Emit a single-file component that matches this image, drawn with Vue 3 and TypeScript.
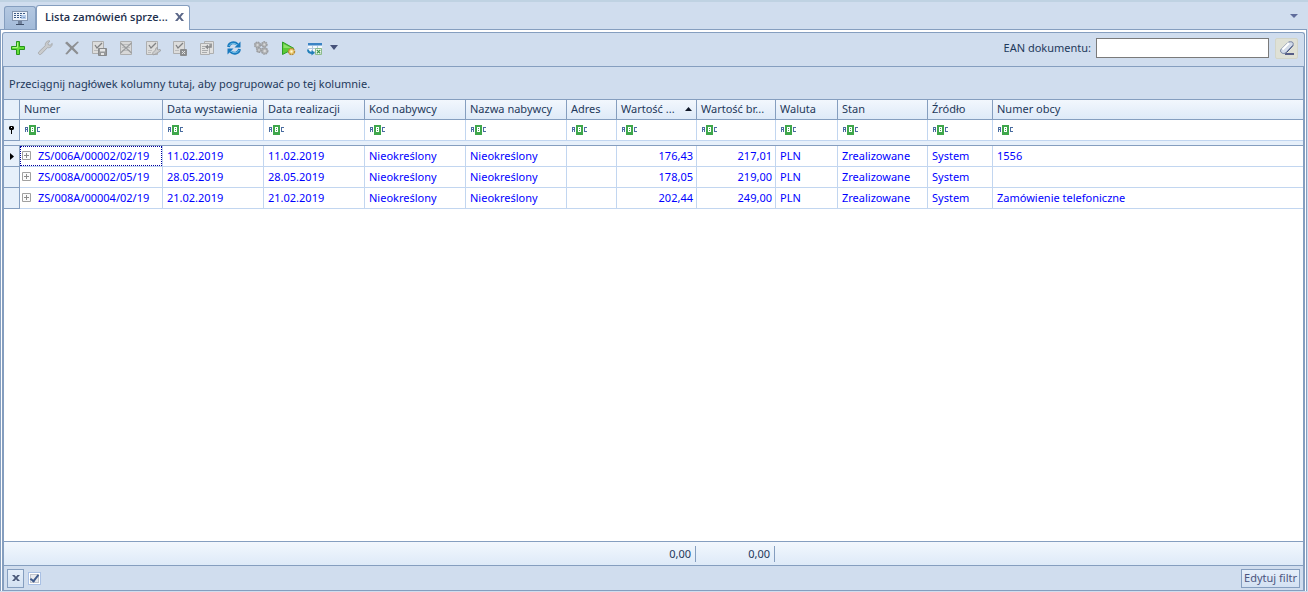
<script setup lang="ts">
import { ref } from 'vue'

interface Column {
  key: string
  title: string
  width: number
  numeric?: boolean
  sorted?: boolean
}

interface Order {
  [key: string]: string
}

const columns: Column[] = [
  { key: 'number', title: 'Numer', width: 143 },
  { key: 'issued', title: 'Data wystawienia', width: 101 },
  { key: 'due', title: 'Data realizacji', width: 101 },
  { key: 'buyerCode', title: 'Kod nabywcy', width: 101 },
  { key: 'buyerName', title: 'Nazwa nabywcy', width: 101 },
  { key: 'address', title: 'Adres', width: 50 },
  { key: 'net', title: 'Wartość ...', width: 80, numeric: true, sorted: true },
  { key: 'gross', title: 'Wartość br...', width: 79, numeric: true },
  { key: 'currency', title: 'Waluta', width: 62 },
  { key: 'state', title: 'Stan', width: 90 },
  { key: 'source', title: 'Źródło', width: 65 },
  { key: 'foreign', title: 'Numer obcy', width: 0 },
]

const orders: Order[] = [
  { number: 'ZS/006A/00002/02/19', issued: '11.02.2019', due: '11.02.2019', net: '176,43', gross: '217,01', foreign: '1556' },
  { number: 'ZS/008A/00002/05/19', issued: '28.05.2019', due: '28.05.2019', net: '178,05', gross: '219,00', foreign: '' },
  { number: 'ZS/008A/00004/02/19', issued: '21.02.2019', due: '21.02.2019', net: '202,44', gross: '249,00', foreign: 'Zamówienie telefoniczne' },
].map((o) => ({
  buyerCode: 'Nieokreślony',
  buyerName: 'Nieokreślony',
  address: '',
  currency: 'PLN',
  state: 'Zrealizowane',
  source: 'System',
  ...o,
}))

const ean = ref('')
const filterOn = ref(true)
const selected = ref(0)
</script>

<template>
  <div class="window">
    <nav class="tabs">
      <button class="tab home" aria-label="Pulpit">
        <svg width="16" height="16" viewBox="0 0 16 16">
          <rect x="0.5" y="1.5" width="15" height="9" fill="#eef4fb" stroke="#8496b0" />
          <path d="M2 3.500h12M2 5.500h9M2 7.500h12" stroke="#3c5a86" stroke-dasharray="2 1" />
          <path d="M9 5h5v4H9z" fill="#9dbbe2" opacity=".7" />
          <path d="M6 11h4v3H6z" fill="#6f809a" />
          <path d="M4 14.500h8" stroke="#3f4f68" />
        </svg>
      </button>
      <div class="tab active">
        <span>Lista zamówień sprze...</span>
        <button class="close" aria-label="Zamknij kartę">
          <svg width="9" height="8" viewBox="0 0 9 8"><path d="M0 0h2.500l2 2.500 2-2.500H9L5.800 4 9 8H6.500l-2-2.500-2 2.500H0l3.200-4z" fill="#5b6788" /></svg>
        </button>
      </div>
      <button class="tab-menu" aria-label="Lista kart">
        <svg width="8" height="4" viewBox="0 0 8 4"><path d="M0 0h8L4 4z" fill="#5f6c9b" /></svg>
      </button>
    </nav>

    <main class="frame">
      <div class="panel">
        <div class="toolbar">
          <button class="tool" aria-label="Dodaj">
            <svg width="16" height="16" viewBox="0 0 16 16"><path d="M6.500 1.500h3v5h5v3h-5v5h-3v-5h-5v-3h5z" fill="#63dc35" stroke="#27951c" /><path d="M7.500 2.500v5h-5" fill="none" stroke="#b2f58c" /></svg>
          </button>
          <button class="tool" aria-label="Edytuj">
            <svg width="16" height="16" viewBox="0 0 16 16"><path d="M10 1.500c1-.8 2.300-.8 3-.5l-2 2.200.4 1.700 1.800.3 2-1.800c.2 2.700-1.900 4.900-4.700 4.200L4.300 14c-1.600 1.600-4-.5-2.400-2.200L8.400 5.500C8 4 8.600 2.500 10 1.500z" fill="#c9cbcd" stroke="#a6a8aa" stroke-width=".9" /></svg>
          </button>
          <button class="tool" aria-label="Usuń">
            <svg width="16" height="16" viewBox="0 0 16 16"><path d="M1 3l2-1.500 5 4.700L13.500 1.500 15 2 9.500 7.700l5 5.300-1.500 1.500-5.200-5L3 14.500 1.200 14l5-6z" fill="#8d8f92" /></svg>
          </button>
          <button class="tool" aria-label="Zatwierdź i zapisz">
            <svg width="16" height="16" viewBox="0 0 16 16"><path d="M1.500 1.500h11v12h-11z" fill="#dddddc" stroke="#adaeaf" /><path d="M4 5l2 3 5-5" fill="none" stroke="#808284" stroke-width="1.300" /><path d="M3 10.500h4" stroke="#bbbcbd" /><path d="M7.500 8.500h8v7h-8z" fill="#97999b" stroke="#87898b" /><path d="M9 9h5v2.500H9zM10 13h3v2h-3z" fill="#e4e5e6" /></svg>
          </button>
          <button class="tool" aria-label="Anuluj dokument">
            <svg width="16" height="16" viewBox="0 0 16 16"><path d="M2.500 1.500h11v13h-11z" fill="#d8d8d8" stroke="#adaeaf" /><path d="M4 4.500h8M4 7.500h8M4 10.500h8" stroke="#bbbcbd" /><path d="M2.500 3l11 10M13.500 3l-11 10" stroke="#9a9c9e" stroke-width="1.200" /></svg>
          </button>
          <button class="tool" aria-label="Zatwierdź z korektą">
            <svg width="16" height="16" viewBox="0 0 16 16"><path d="M1.500 1.500h11v13h-11z" fill="#dddddc" stroke="#adaeaf" /><path d="M4 5l2 3 5-5" fill="none" stroke="#808284" stroke-width="1.300" /><path d="M3 10.500h4M3 12.500h3" stroke="#bbbcbd" /><path d="M8.500 15l-1-2 3-3 .5-2 1.500-.5v2l1.500.5 1-.8.5 1.800-2.500 1.500z" fill="#cccdce" stroke="#999b9d" stroke-width=".8" /></svg>
          </button>
          <button class="tool" aria-label="Cofnij zatwierdzenie">
            <svg width="16" height="16" viewBox="0 0 16 16"><path d="M1.500 1.500h11v12h-11z" fill="#dddddc" stroke="#adaeaf" /><path d="M4 5l2 3 5-5" fill="none" stroke="#808284" stroke-width="1.300" /><path d="M3 10.500h4" stroke="#bbbcbd" /><rect x="8" y="9" width="7" height="7" rx="1" fill="#8a8c8e" /><path d="M10 11l3 3M13 11l-3 3" stroke="#e2e3e4" /></svg>
          </button>
          <button class="tool" aria-label="Przekształć dokument">
            <svg width="16" height="16" viewBox="0 0 16 16"><path d="M5.500 1.500h9v12h-9z" fill="#e0e0df" stroke="#adaeaf" /><path d="M1.500 3.500h9v11h-9z" fill="#e2e2e1" stroke="#adaeaf" /><path d="M3 6.500h4M3 8.500h3M3 10.500h6M3 12.500h5" stroke="#a9abad" /><path d="M12 3.500v3.500H8.500" fill="none" stroke="#88898b" stroke-width="1.600" /><path d="M9 4.500v5L6 7z" fill="#88898b" /></svg>
          </button>
          <button class="tool" aria-label="Odśwież">
            <svg width="16" height="16" viewBox="0 0 16 16"><path d="M2.500 7C3 2.500 8.500 1.500 11.500 4.500" fill="none" stroke="#1879bd" stroke-width="2.800" /><path d="M14.500 1.500v6h-6z" fill="#1879bd" /><path d="M13.500 9c-.5 4.500-6 5.500-9 2.500" fill="none" stroke="#1879bd" stroke-width="2.800" /><path d="M1.500 14.500v-6h6z" fill="#1879bd" /><path d="M3 5.800C4.500 3 8.500 2.500 11 5M13 10.200c-1.500 2.800-5.500 3.300-8 .8" fill="none" stroke="#7fcbf0" /></svg>
          </button>
          <button class="tool" aria-label="Powiązania">
            <svg width="16" height="16" viewBox="0 0 16 16"><g fill="#b4b6b8" stroke="#9b9da0" stroke-width="1.600" stroke-dasharray="1.600 .6"><circle cx="4.500" cy="5" r="2.800" /><circle cx="11.300" cy="4.500" r="2.600" /><circle cx="6" cy="10" r="2.300" /><circle cx="11.700" cy="11" r="3" /></g><g fill="#d9dadb"><circle cx="4.500" cy="5" r="1" /><circle cx="11.300" cy="4.500" r="1" /><circle cx="6" cy="10" r=".8" /><circle cx="11.700" cy="11" r="1.200" /></g></svg>
          </button>
          <button class="tool" aria-label="Wykonaj">
            <svg width="16" height="16" viewBox="0 0 16 16"><path d="M2.500 2v12.500L14 8.500z" fill="#5bcb35" stroke="#2e9c27" stroke-linejoin="round" /><path d="M3.500 4v4l8 0z" fill="#a4e881" opacity=".7" /><circle cx="11.500" cy="11.500" r="3" fill="#f3d681" stroke="#b88b34" stroke-width="1.500" stroke-dasharray="2 .5" /><circle cx="11.500" cy="11.500" r="1" fill="#fff8e0" /></svg>
          </button>
          <button class="tool" aria-label="Eksportuj">
            <svg width="16" height="16" viewBox="0 0 16 16"><path d="M1 3h14v8H1z" fill="#f6fafd" /><path d="M1 3h14v2.500H1z" fill="#3b83c4" /><path d="M1 8.500h14M5.500 6v5M10.500 6v5" stroke="#b4c8dd" /><path d="M1 9.500c0 3 2 3.500 4.500 3.500" fill="none" stroke="#217fb8" stroke-width="2" /><path d="M4.500 10v5.500L8 12.800z" fill="#217fb8" /><path d="M8.500 8.500h6v6h-6z" fill="#f0f8ee" stroke="#8dbb8d" /><path d="M9.800 9.800l3.500 3.500M13.300 9.800l-3.500 3.500" stroke="#3a9447" stroke-width="1.200" /></svg>
          </button>
          <button class="tool-menu" aria-label="Opcje eksportu">
            <svg width="8" height="5" viewBox="0 0 8 5"><path d="M0 0h8L4 5z" fill="#46527a" /></svg>
          </button>
          <label class="ean-label" for="ean">EAN dokumentu:</label>
          <input id="ean" v-model="ean" class="ean" type="text" />
          <button class="erase" aria-label="Wyczyść">
            <svg width="16" height="16" viewBox="0 0 16 16"><path d="M6 14h9" stroke="#28306a" stroke-width="1.500" /><path d="M2 9.500L9 2.500c1-1 4-1 4.800 0 .7 1 .5 2.500-.3 3.300L7 12.700c-1 1-3.500 1-4.500 0s-1.300-2.300-.5-3.200z" fill="#d3dcea" stroke="#6f7d9f" /><path d="M3.500 9.500L10 3" stroke="#fff" stroke-width="2" /><path d="M7.500 12.500L14 5.500" stroke="#37487c" /></svg>
          </button>
        </div>

        <section class="grid">
          <div class="group-panel">Przeciągnij nagłówek kolumny tutaj, aby pogrupować po tej kolumnie.</div>
          <div class="table-area">
            <table>
              <colgroup>
                <col class="indicator-col" />
                <col v-for="c in columns" :key="c.key" :style="{ width: c.width ? c.width + 'px' : 'auto' }" />
              </colgroup>
              <thead>
                <tr class="head">
                  <th class="indicator"></th>
                  <th v-for="c in columns" :key="c.key" scope="col">
                    <div class="title">
                      <span>{{ c.title }}</span>
                      <svg v-if="c.sorted" width="7" height="4" viewBox="0 0 7 4"><path d="M3.500 0L7 4H0z" fill="#101828" /></svg>
                    </div>
                  </th>
                </tr>
                <tr class="filters">
                  <td class="indicator">
                    <svg width="5" height="8" viewBox="0 0 5 8"><path d="M1 0h3l1 1v2L4 4H3v4H2V4H1L0 3V1z" fill="#000" /><path d="M2 1h1v1H2z" fill="#fff" /></svg>
                  </td>
                  <td v-for="c in columns" :key="c.key">
                    <div class="filter">
                      <svg width="15" height="10" viewBox="0 0 15 10" shape-rendering="crispEdges">
                        <path d="M0 2h3v5H2V5H1v2H0zM1 3v1h1V3zM12 2h3v1h-2v3h2v1h-3z" fill="#4a6ca0" fill-rule="evenodd" />
                        <rect x="4" width="7" height="10" rx="1" fill="#3fa74b" />
                        <path d="M6 2h3v5H6zM7 3v1h1V3zM7 5v1h1V5z" fill="#fff" fill-rule="evenodd" />
                      </svg>
                      <input type="text" :aria-label="'Filtr: ' + c.title" />
                    </div>
                  </td>
                </tr>
                <tr class="divider"><td :colspan="columns.length + 1"></td></tr>
              </thead>
              <tbody>
                <tr v-for="(o, i) in orders" :key="o.number" @click="selected = i">
                  <td class="indicator">
                    <svg v-if="selected === i" width="4" height="7" viewBox="0 0 4 7"><path d="M0 0l4 3.500L0 7z" fill="#000" /></svg>
                  </td>
                  <td v-for="c in columns" :key="c.key" :class="{ numeric: c.numeric, first: c.key === 'number', focused: c.key === 'number' && selected === i }">
                    <div v-if="c.key === 'number'" class="number">
                      <button class="expand" aria-label="Rozwiń">
                        <svg width="9" height="9" viewBox="0 0 9 9"><path d="M.5.5h8v8h-8z" fill="#fafafa" stroke="#a0a0a0" /><path d="M2 4.500h5M4.500 2v5" stroke="#8c8c8c" /></svg>
                      </button>
                      <span>{{ o.number }}</span>
                    </div>
                    <template v-else>{{ o[c.key] }}</template>
                  </td>
                </tr>
              </tbody>
            </table>
          </div>
          <div class="summary">
            <span class="total net">0,00</span>
            <span class="total gross">0,00</span>
          </div>
          <div class="filter-bar">
            <button class="clear" aria-label="Usuń filtr">
              <svg width="8" height="6" viewBox="0 0 8 6"><path d="M0 0h2.500L4 1.800 5.500 0H8L5.200 3 8 6H5.500L4 4.200 2.500 6H0l2.800-3z" fill="#4a5878" /></svg>
            </button>
            <input v-model="filterOn" class="toggle" type="checkbox" aria-label="Filtr aktywny" />
            <button class="edit">Edytuj filtr</button>
          </div>
        </section>
      </div>
    </main>
  </div>
</template>

<style>
html,
body {
  background: #d0ddee;
}
</style>

<style scoped>
.window {
  box-sizing: border-box;
  min-height: 100vh;
  display: flex;
  flex-direction: column;
  padding: 0 1px 1px 0;
  background: #d0ddee;
  border-top: 2px solid #bfd2e2;
  color: #1e395b;
  font: 11px/16px "Noto Sans", "Open Sans", sans-serif;
}

button {
  padding: 0;
  border: 0;
  background: none;
  color: inherit;
  font: inherit;
}

svg {
  display: block;
  flex: none;
}

.tabs {
  display: flex;
  align-items: flex-end;
  height: 27px;
  padding-left: 4px;
}

.tab {
  box-sizing: border-box;
  display: flex;
  align-items: center;
  border: 1px solid #859ebf;
  border-bottom: 0;
  border-radius: 3px 3px 0 0;
}

.home {
  width: 32px;
  height: 23px;
  justify-content: center;
  background: linear-gradient(#b4c8e1, #a3bbd9);
}

.active {
  height: 25px;
  margin-bottom: -1px;
  padding: 0 5px 3px 8px;
  gap: 7px;
  background: #fff;
  color: #1e2f4d;
  font-family: "Open Sans", "Noto Sans", sans-serif;
  font-weight: 600;
  z-index: 1;
}

.tab-menu {
  margin-left: auto;
  padding: 0 9px 11px;
}

.frame {
  flex: 1;
  display: flex;
  padding: 2px 1px 0;
  background: #fff;
  border: 1px solid #859ebf;
  border-bottom: 0;
}

.panel {
  flex: 1;
  min-width: 0;
  display: flex;
  flex-direction: column;
  background: #d0ddee;
  border: 1px solid #859ebf;
  border-bottom: 0;
  border-radius: 3px 3px 0 0;
}

.toolbar {
  display: flex;
  align-items: center;
  height: 30px;
  padding: 0 6px 3px 1px;
}

.tool {
  width: 27px;
  height: 24px;
  display: flex;
  align-items: center;
  justify-content: center;
}

.tool-menu {
  padding: 0 2px 2px;
}

.ean-label {
  margin-left: auto;
  margin-right: 5px;
}

.ean {
  box-sizing: border-box;
  width: 173px;
  height: 20px;
  border: 1px solid #7a7a7a;
  background: #fff;
  font: inherit;
}

.erase {
  display: flex;
  align-items: center;
  justify-content: center;
  width: 23px;
  height: 21px;
  margin-left: 6px;
  border: 1px solid #d3d5c8;
  border-radius: 2px;
  background: #dfe1d6;
}

.grid {
  flex: 1;
  display: flex;
  flex-direction: column;
  border: 1px solid #859ebf;
}

.group-panel {
  padding: 9px 5px 7px;
}

.table-area {
  flex: 1;
  background: #fff;
  border-top: 1px solid #859ebf;
}

table {
  width: 100%;
  table-layout: fixed;
  border-collapse: separate;
  border-spacing: 0;
}

.indicator-col {
  width: 16px;
}

th,
td {
  box-sizing: border-box;
  height: 21px;
  padding: 0 4px 1px;
  border-right: 1px solid #c2d6f0;
  border-bottom: 1px solid #c2d6f0;
  line-height: 16px;
  text-align: left;
  white-space: nowrap;
  overflow: hidden;
}

.head th {
  height: 20px;
  background: linear-gradient(#f2f7fd, #deeaf8);
  border-color: #859ebf;
  font-weight: normal;
}

th:last-child,
td:last-child {
  border-right: 0;
}

.title {
  display: flex;
  align-items: center;
  justify-content: space-between;
}

th.indicator,
td.indicator {
  padding: 0;
  background: #e7f0fa;
  border-color: #859ebf;
}

.indicator svg {
  margin: 0 auto;
}

.filters td {
  padding-bottom: 0;
}

.filter {
  display: flex;
  align-items: center;
  height: 20px;
  padding-left: 1px;
}

.filter input {
  flex: 1;
  min-width: 0;
  height: 16px;
  padding: 0 2px;
  border: 0;
  outline: 0;
  background: transparent;
  font: inherit;
}

.divider td {
  height: 5px;
  padding: 0;
  background: #e7f0fa;
  border-color: #859ebf;
}

tbody td {
  color: #00f;
}

td.numeric {
  padding-right: 3px;
  text-align: right;
}

td.first {
  padding: 0;
}

.number {
  box-sizing: border-box;
  display: flex;
  align-items: center;
  gap: 7px;
  height: 20px;
  padding: 0 1px 1px;
  border: 1px solid transparent;
}

.focused .number {
  border: 1px dotted #0000a0;
}

.summary {
  display: flex;
  align-items: center;
  height: 23px;
  background: linear-gradient(#f2f7fd, #deeaf8);
  border-top: 1px solid #859ebf;
  border-bottom: 1px solid #859ebf;
}

.total {
  box-sizing: border-box;
  padding-right: 4px;
  border-right: 1px solid #859ebf;
  text-align: right;
}

.net {
  width: 692px;
}

.gross {
  width: 79px;
}

.filter-bar {
  display: flex;
  align-items: center;
  height: 24px;
  padding: 0 3px;
}

.clear,
.edit {
  box-sizing: border-box;
  display: flex;
  align-items: center;
  justify-content: center;
  height: 19px;
  border: 1px solid #859ebf;
  background: linear-gradient(#e6effa, #d3e1f2);
}

.clear {
  width: 17px;
}

.edit {
  margin-left: auto;
  padding: 0 2px;
  color: #4c5580;
}

.toggle {
  box-sizing: border-box;
  appearance: none;
  width: 13px;
  height: 13px;
  margin: 0 0 0 4px;
  border: 1px solid #a9c0e4;
  background: #e8eaee;
  box-shadow: inset 0 0 0 1px #fff, inset 0 0 0 2px #c0c4cc;
}

.toggle:checked::before {
  content: "";
  display: block;
  width: 3px;
  height: 7px;
  margin: 0 0 0 3px;
  border: solid #3f5a8c;
  border-width: 0 2px 2px 0;
  transform: rotate(38deg);
}
</style>
